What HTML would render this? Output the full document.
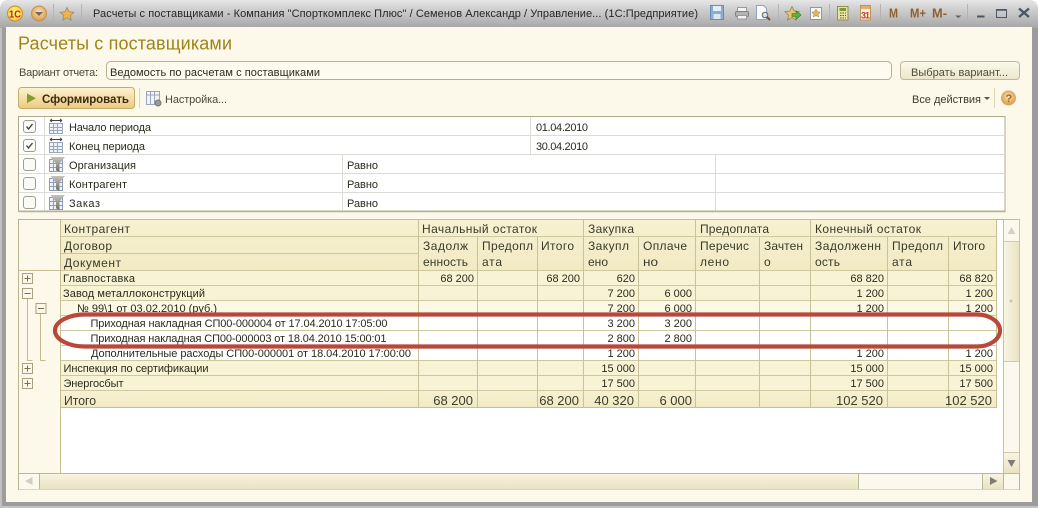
<!DOCTYPE html>
<html lang="ru"><head><meta charset="utf-8"><title>Расчеты с поставщиками</title>
<style>
html,body{margin:0;padding:0;background:#fff;width:1038px;height:508px;overflow:hidden}
svg{display:block}
text{font-family:"Liberation Sans",sans-serif;font-size:11px;fill:#2a2a1c}
.h{font-size:12px;fill:#3a3a2a}
.n{text-anchor:end}
.t{font-size:13px;fill:#3c3c2c}
.l{stroke:#cfc89f;stroke-width:1;fill:none}
.g{stroke:#dcdcd6;stroke-width:1;fill:none}
.box{fill:#fbf8e8;stroke:#a7a282;stroke-width:1}
.sq{stroke:#6e6a4c;stroke-width:1;fill:none}
.m{font-weight:bold;font-size:13px;fill:#8f5f30}
.cb{fill:#fbfbf6;stroke:#a09e88}
.ck{fill:none;stroke:#444;stroke-width:1.400}
</style></head><body>
<svg width="1038" height="508" viewBox="0 0 1038 508" xmlns="http://www.w3.org/2000/svg">
<defs>
<linearGradient id="tb" x1="0" y1="0" x2="0" y2="1"><stop offset="0" stop-color="#e6e6e6"/><stop offset=".25" stop-color="#d4d4d4"/><stop offset="1" stop-color="#a6a6a6"/></linearGradient>
<linearGradient id="bt" x1="0" y1="0" x2="0" y2="1"><stop offset="0" stop-color="#fcf9ea"/><stop offset="1" stop-color="#ebe6cb"/></linearGradient>
<linearGradient id="go" x1="0" y1="0" x2="0" y2="1"><stop offset="0" stop-color="#fdf3d2"/><stop offset="1" stop-color="#edc97e"/></linearGradient>
<linearGradient id="hd" x1="0" y1="0" x2="0" y2="1"><stop offset="0" stop-color="#f7f1d2"/><stop offset="1" stop-color="#f2eac3"/></linearGradient>
<linearGradient id="th" x1="0" y1="0" x2="0" y2="1"><stop offset="0" stop-color="#f8f4e0"/><stop offset="1" stop-color="#e9e3c4"/></linearGradient>
<linearGradient id="tv" x1="0" y1="0" x2="1" y2="0"><stop offset="0" stop-color="#f8f4e0"/><stop offset="1" stop-color="#e9e3c4"/></linearGradient>
<linearGradient id="fn" x1="0" y1="0" x2="0" y2="1"><stop offset="0" stop-color="#c4c4bc"/><stop offset="1" stop-color="#6e6e66"/></linearGradient>
<radialGradient id="or" cx=".5" cy=".4" r=".6"><stop offset="0" stop-color="#f8e3b4"/><stop offset="1" stop-color="#d99a48"/></radialGradient>
<radialGradient id="ye" cx=".5" cy=".45" r=".6"><stop offset="0" stop-color="#fff68a"/><stop offset=".75" stop-color="#fbd84a"/><stop offset="1" stop-color="#eda52a"/></radialGradient>
</defs>

<!-- window frame -->
<path d="M0 508V10Q0 0 10 0H1028Q1038 0 1038 10V508Z" fill="#9c9c9c"/>
<path d="M0 28V10Q0 0 10 0H1028Q1038 0 1038 10V28Z" fill="url(#tb)"/>
<rect x="0" y="506" width="1038" height="2" fill="#c4c4c4"/>
<rect x="0" y="28" width="2" height="480" fill="#c0c0c0"/>
<rect x="6" y="27" width="1026" height="475" fill="#fcf9ea"/>

<!-- title bar left -->
<circle cx="15" cy="13.500" r="7.500" fill="url(#ye)" stroke="#c98a35"/>
<text x="9" y="17.500" style="font-size:10.500px;font-weight:bold;fill:#c8201c" textLength="12" lengthAdjust="spacingAndGlyphs">1С</text>
<circle cx="39" cy="13.500" r="7.500" fill="url(#or)" stroke="#c49055"/>
<path d="M35 12h8l-4 4z" fill="#6f6a60"/>
<path class="sq" d="M53.500 4v19M81.500 4v19" style="stroke:#b4b4b4"/>
<path d="M67 7.500l2 4.300 4.800.5-3.600 3.200 1 4.700-4.200-2.500-4.200 2.500 1-4.700-3.600-3.200 4.800-.5z" fill="#f0b54a" stroke="#9b8a6a" stroke-width=".8"/>
<text x="93" y="17" textLength="605" style="fill:#262626">Расчеты с поставщиками - Компания "Спорткомплекс Плюс" / Семенов Александр / Управление... (1С:Предприятие)</text>

<!-- title bar right icons -->
<rect x="710.500" y="5.500" width="13" height="14" fill="#8badcf" stroke="#6a8db4"/>
<rect x="713" y="6" width="8" height="5" fill="#e6eef6"/><rect x="713.500" y="14" width="7" height="5" fill="#dfe7ee"/>
<rect x="737.500" y="7.500" width="9" height="4" fill="#f4f4f4" stroke="#999"/>
<rect x="735.500" y="11.500" width="13" height="5" rx="1.500" fill="#b4b4b4" stroke="#808080"/>
<rect x="737.500" y="15.500" width="9" height="3.500" fill="#f4f4f4" stroke="#999"/>
<path d="M756.500 5.500h7l3 3v11h-10z" fill="#fbfbfb" stroke="#8fa6c2"/>
<circle cx="765" cy="15" r="2.800" fill="#cfe0ee" stroke="#666"/><path d="M767 17l3 3" stroke="#7a5030" stroke-width="2"/>
<path class="sq" d="M778.500 4v19M829.500 4v19M880.500 4v19M967.500 4v19" style="stroke:#b4b4b4"/>
<path d="M792 6.500l2.200 4.600 5 .6-3.800 3.400 1 5-4.400-2.600-4.400 2.600 1-5-3.800-3.400 5-.6z" fill="#eec36a" stroke="#8f8464" stroke-width=".8"/>
<path d="M792 13.500h4v-3l5 4.500-5 4.500v-3h-4z" fill="#5fb03e" stroke="#2f7a22" stroke-width=".6"/>
<rect x="810.500" y="7.500" width="11" height="12" fill="#fbfbf8" stroke="#8c96a4"/>
<path d="M816 9l1.300 2.800 2.900.4-2.100 2 .5 2.800-2.600-1.400-2.600 1.400.5-2.800-2.100-2 2.900-.4z" fill="#e8b45a" stroke="#8f7a4c" stroke-width=".5"/>
<rect x="837.500" y="6.500" width="10.500" height="13.500" fill="#e9e3a8" stroke="#9a8a52"/>
<rect x="839.500" y="8" width="6.500" height="3" fill="#7b9a3a"/>
<path d="M840 13h1.500M842.500 13H844M845 13h1M840 15.500h1.500M842.500 15.500H844M845 15.500h1M840 18h1.500M842.500 18H844M845 18h1" stroke="#6d5c30"/>
<rect x="860.500" y="5.500" width="10" height="14.500" fill="#fbf2dc" stroke="#c0955a"/>
<rect x="861" y="6" width="9" height="3" fill="#e3ad6b"/>
<text x="861" y="18.500" style="font-size:9px;font-weight:bold;fill:#c8372a" textLength="9">31</text>
<text class="m" x="889" y="17.500" textLength="9" lengthAdjust="spacingAndGlyphs">M</text>
<text class="m" x="910" y="17.500" textLength="16" lengthAdjust="spacingAndGlyphs">M+</text>
<text class="m" x="932" y="17.500" textLength="15" lengthAdjust="spacingAndGlyphs">M-</text>
<path d="M955 15.500h6.500l-3.250 2.500z" fill="#5a6270"/>
<rect x="977" y="15.500" width="7.500" height="2" fill="#4c5666"/>
<rect x="996.500" y="9.500" width="10" height="8" fill="none" stroke="#4c5666"/><path d="M996 10h11" stroke="#4c5666" stroke-width="1.500"/>
<path d="M1019 8.500l10 8.500M1029 8.500l-10 8.500" stroke="#4c5666" stroke-width="2.400"/>

<!-- heading -->
<text x="18" y="49.500" textLength="214" style="font-size:18px;fill:#a08318">Расчеты с поставщиками</text>
<text x="19" y="76" textLength="79" style="fill:#4a4a3a">Вариант отчета:</text>
<rect x="106.500" y="61.500" width="785" height="18" rx="4" fill="#fdfbf0" stroke="#b5b18e"/>
<text x="110" y="76" textLength="210">Ведомость по расчетам с поставщиками</text>
<rect x="900.500" y="61.500" width="119" height="18" rx="3.500" fill="url(#bt)" stroke="#bdb99a"/>
<text x="911" y="76" textLength="97" style="fill:#4d4d3d">Выбрать вариант...</text>

<!-- command bar -->
<rect x="18.500" y="87.500" width="116" height="21" rx="3" fill="url(#go)" stroke="#c7ab6d"/>
<path d="M27 93.500l9 4.800-9 4.800z" fill="#7f9f2c"/>
<text x="42" y="103" textLength="87" style="font-weight:bold;font-size:11.500px;fill:#3a2c10">Сформировать</text>
<path d="M139.500 88v20" stroke="#dcd6b8"/>
<rect x="146.500" y="91.500" width="13" height="13" fill="#f2f4f8" stroke="#9aa6bc"/>
<path d="M147 95h12M150.500 92v12M154.500 92v12" stroke="#9aa6bc"/>
<circle cx="158" cy="103" r="3" fill="#9a9a9a" stroke="#777"/>
<text x="165" y="103" textLength="62" style="fill:#4a4a3a">Настройка...</text>
<text x="912" y="103" textLength="69" style="fill:#3a3a2a">Все действия</text>
<path d="M984 97h6l-3 3z" fill="#555"/>
<path d="M994.500 88v20" stroke="#dcd6b8"/>
<circle cx="1008.500" cy="98" r="7" fill="url(#or)" stroke="#d7a868"/>
<text x="1005.500" y="102" style="font-weight:bold;fill:#9c6a26;font-size:11px">?</text>

<!-- filter table -->
<rect x="18.500" y="116.500" width="986.500" height="94.500" fill="#fff" stroke="#adaa8c"/>
<path class="g" d="M19 135.500h986M19 154.500h986M19 173.500h986M19 192.500h986M44.500 117v94M530.500 117v37M342.500 154v57M715.500 154v57"/>
<path d="M18.500 211.500h987" stroke="#b5b29a" stroke-width="1.500"/>
<rect class="cb" x="23.500" y="120.500" width="12" height="12" rx="2.500"/>
<rect class="cb" x="23.500" y="139.500" width="12" height="12" rx="2.500"/>
<rect class="cb" x="23.500" y="158.500" width="12" height="12" rx="2.500"/>
<rect class="cb" x="23.500" y="177.500" width="12" height="12" rx="2.500"/>
<rect class="cb" x="23.500" y="196.500" width="12" height="12" rx="2.500"/>
<path class="ck" d="M26.500 126.500l2 2.500 4-5"/>
<path class="ck" d="M26.500 145.500l2 2.500 4-5"/>

<rect x="49.500" y="123.500" width="13" height="10" fill="#eef2f8" stroke="#9aa6bc"/><path d="M53.500 124v9M57.500 124v9M50 127.500h12M50 130.500h12" stroke="#9aa6bc"/><path d="M50 120.500h12M50 120.500l2-1.500M50 120.500l2 1.500M62 120.500l-2-1.500M62 120.500l-2 1.500" stroke="#444" fill="none"/>
<rect x="49.500" y="142.500" width="13" height="10" fill="#eef2f8" stroke="#9aa6bc"/><path d="M53.500 143v9M57.500 143v9M50 146.500h12M50 149.500h12" stroke="#9aa6bc"/><path d="M50 139.500h12M50 139.500l2-1.500M50 139.500l2 1.500M62 139.500l-2-1.500M62 139.500l-2 1.500" stroke="#444" fill="none"/>

<rect x="49.500" y="159.500" width="13" height="12" fill="#eef2f8" stroke="#8f9cb4"/><path d="M53.500 160v11M50 163.500h12M50 167.500h12" stroke="#8f9cb4"/><path d="M50.500 157h14.500l-5.500 6.500v8.500l-3.500-1.800v-6.700z" fill="url(#fn)"/>
<rect x="49.500" y="178.500" width="13" height="12" fill="#eef2f8" stroke="#8f9cb4"/><path d="M53.500 179v11M50 182.500h12M50 186.500h12" stroke="#8f9cb4"/><path d="M50.500 176h14.500l-5.500 6.500v8.500l-3.500-1.800v-6.700z" fill="url(#fn)"/>
<rect x="49.500" y="197.500" width="13" height="12" fill="#eef2f8" stroke="#8f9cb4"/><path d="M53.500 198v11M50 201.500h12M50 205.500h12" stroke="#8f9cb4"/><path d="M50.500 195h14.500l-5.500 6.500v8.500l-3.500-1.800v-6.700z" fill="url(#fn)"/>

<text x="69" y="131" textLength="82">Начало периода</text>
<text x="69" y="150" textLength="76">Конец периода</text>
<text x="69" y="169" textLength="67">Организация</text>
<text x="69" y="188" textLength="58">Контрагент</text>
<text x="69" y="207" textLength="31">Заказ</text>
<text x="347" y="169" textLength="31">Равно</text>
<text x="347" y="188" textLength="31">Равно</text>
<text x="347" y="207" textLength="31">Равно</text>
<text x="536" y="131" textLength="52">01.04.2010</text>
<text x="536" y="150" textLength="52">30.04.2010</text>

<!-- report area -->
<rect x="18.500" y="219.500" width="1001" height="270" fill="#fff" stroke="#b8b48f"/>
<rect x="19" y="220" width="41.500" height="253" fill="#fcf9ea"/>
<rect x="61" y="220" width="936" height="50" fill="url(#hd)"/>
<rect x="61" y="270" width="936" height="30" fill="#f9f3d6"/>
<rect x="61" y="300" width="936" height="15" fill="#fcf8e6"/>
<rect x="61" y="360" width="936" height="31" fill="#f9f3d6"/>
<rect x="61" y="391" width="936" height="16" fill="url(#hd)"/>
<path class="l" d="M61 270.500h936M61 285.500h936M61 300.500h936M61 315.500h936M61 330.500h936M61 345.500h936M61 360.500h936M61 375.500h936M61 390.500h936M61 236.500h936M61 253.500h357"/>
<path d="M19 270.500h42M60.500 220v253M61 219.500h936M61 407.500h936" stroke="#c5bf92" fill="none"/>
<path class="l" style="stroke:#c9c296" d="M418.500 220v187M477.500 237v170M537.500 237v170M583.500 220v187M638.500 237v170M695.500 220v187M759.500 237v170M810.500 220v187M887.500 237v170M948.500 237v170M996.500 220v187"/>

<!-- tree -->
<g>
<rect class="box" x="22.500" y="273.500" width="10" height="10"/><path d="M24.500 278.500h6M27.500 275.500v6" stroke="#77724e"/>
<rect class="box" x="22.500" y="288.500" width="10" height="10"/><path d="M24.500 293.500h6" stroke="#77724e"/>
<rect class="box" x="36" y="303.500" width="10" height="10"/><path d="M38 308.500h6" stroke="#77724e"/>
<rect class="box" x="22.500" y="363.500" width="10" height="10"/><path d="M24.500 368.500h6M27.500 365.500v6" stroke="#77724e"/>
<rect class="box" x="22.500" y="378.500" width="10" height="10"/><path d="M24.500 383.500h6M27.500 380.500v6" stroke="#77724e"/>
<path d="M27.500 299v61.500h5M40.500 314v46.500h5" fill="none" stroke="#c4bc8c"/>
</g>

<!-- header text -->
<text class="h" x="64" y="233" textLength="66">Контрагент</text>
<text class="h" x="64" y="250" textLength="48">Договор</text>
<text class="h" x="64" y="267" textLength="57">Документ</text>
<text class="h" x="422" y="233" textLength="115">Начальный остаток</text>
<text class="h" x="588" y="233" textLength="46">Закупка</text>
<text class="h" x="700" y="233" textLength="69">Предоплата</text>
<text class="h" x="815" y="233" textLength="106">Конечный остаток</text>
<text class="h" x="423" y="250" textLength="45">Задолж</text><text class="h" x="423" y="266" textLength="45">енность</text>
<text class="h" x="482" y="250" textLength="51">Предопл</text><text class="h" x="482" y="266" textLength="20">ата</text>
<text class="h" x="541" y="250" textLength="33">Итого</text>
<text class="h" x="588" y="250" textLength="41">Закупл</text><text class="h" x="588" y="266" textLength="20">ено</text>
<text class="h" x="643" y="250" textLength="44">Оплаче</text><text class="h" x="643" y="266" textLength="15" lengthAdjust="spacingAndGlyphs">но</text>
<text class="h" x="700" y="250" textLength="49">Перечис</text><text class="h" x="700" y="266" textLength="29">лено</text>
<text class="h" x="764" y="250" textLength="39">Зачтен</text><text class="h" x="764" y="266" textLength="7">о</text>
<text class="h" x="815" y="250" textLength="66">Задолженн</text><text class="h" x="815" y="266" textLength="25">ость</text>
<text class="h" x="892" y="250" textLength="51">Предопл</text><text class="h" x="892" y="266" textLength="20">ата</text>
<text class="h" x="953" y="250" textLength="32">Итого</text>

<!-- row labels -->
<text x="63" y="282" textLength="72">Главпоставка</text>
<text x="63" y="297" textLength="142">Завод металлоконструкций</text>
<text x="77" y="312" textLength="140">№ 99\1 от 03.02.2010 (руб.)</text>
<text x="90.500" y="327" textLength="297">Приходная накладная СП00-000004 от 17.04.2010 17:05:00</text>
<text x="90.500" y="342" textLength="296">Приходная накладная СП00-000003 от 18.04.2010 15:00:01</text>
<text x="91" y="357" textLength="320">Дополнительные расходы СП00-000001 от 18.04.2010 17:00:00</text>
<text x="63.500" y="372" textLength="145">Инспекция по сертификации</text>
<text x="63.500" y="387" textLength="60">Энергосбыт</text>
<text class="t" x="64" y="405" textLength="32" lengthAdjust="spacingAndGlyphs">Итого</text>

<!-- numbers -->
<text class="n" x="474" y="282">68 200</text><text class="n" x="580" y="282">68 200</text><text class="n" x="635" y="282">620</text><text class="n" x="884" y="282">68 820</text><text class="n" x="993" y="282">68 820</text>
<text class="n" x="635" y="297">7 200</text><text class="n" x="692" y="297">6 000</text><text class="n" x="884" y="297">1 200</text><text class="n" x="993" y="297">1 200</text>
<text class="n" x="635" y="312">7 200</text><text class="n" x="692" y="312">6 000</text><text class="n" x="884" y="312">1 200</text><text class="n" x="993" y="312">1 200</text>
<text class="n" x="635" y="327">3 200</text><text class="n" x="692" y="327">3 200</text>
<text class="n" x="635" y="342">2 800</text><text class="n" x="692" y="342">2 800</text>
<text class="n" x="635" y="357">1 200</text><text class="n" x="884" y="357">1 200</text><text class="n" x="993" y="357">1 200</text>
<text class="n" x="635" y="372">15 000</text><text class="n" x="884" y="372">15 000</text><text class="n" x="993" y="372">15 000</text>
<text class="n" x="635" y="387">17 500</text><text class="n" x="884" y="387">17 500</text><text class="n" x="993" y="387">17 500</text>
<text class="n t" x="473" y="405">68 200</text><text class="n t" x="579" y="405">68 200</text><text class="n t" x="634" y="405">40 320</text><text class="n t" x="692" y="405">6 000</text><text class="n t" x="883" y="405">102 520</text><text class="n t" x="992" y="405">102 520</text>

<!-- vertical scrollbar -->
<rect x="1003.500" y="220" width="16" height="253" fill="#fbf9ee" stroke="#c9c5a4"/>
<rect x="1004" y="220" width="15" height="21" fill="#fbf9ee"/>
<rect x="1004" y="241" width="15" height="121" fill="url(#tv)"/>
<path d="M1004 241.500h15M1004 361.500h15M1004 452.500h15" stroke="#cfcbaa"/>
<rect x="1004" y="453" width="15" height="20" fill="url(#th)"/>
<path d="M1007.500 234l4-7 4 7z" fill="#d4d2c4"/>
<path d="M1007.500 460l4 7 4-7z" fill="#7d7d75"/>
<circle cx="1011" cy="301" r="1.500" fill="#c9c6b0"/>

<!-- horizontal scrollbar -->
<rect x="19" y="473.500" width="1000" height="16" fill="#fbf9ee"/>
<rect x="40" y="474" width="818" height="15" fill="url(#th)"/>
<path d="M19 473.500h1001M39.500 474v15M858.500 474v15M982.500 474v15M1003.500 474v15" stroke="#bdb998" fill="none"/>
<rect x="983" y="474" width="20" height="15" fill="url(#th)"/>
<path d="M32.500 477l-7.500 4 7.500 4z" fill="#d0cec0"/>
<path d="M990 477l7.500 4-7.500 4z" fill="#7d7d75"/>

<!-- highlight -->
<path d="M85 314.500H977a23 16 0 0 1 0 32H85a30 16 0 0 1 0-32z" fill="none" stroke="#b7483a" stroke-width="4.200"/>
</svg>
</body></html>
